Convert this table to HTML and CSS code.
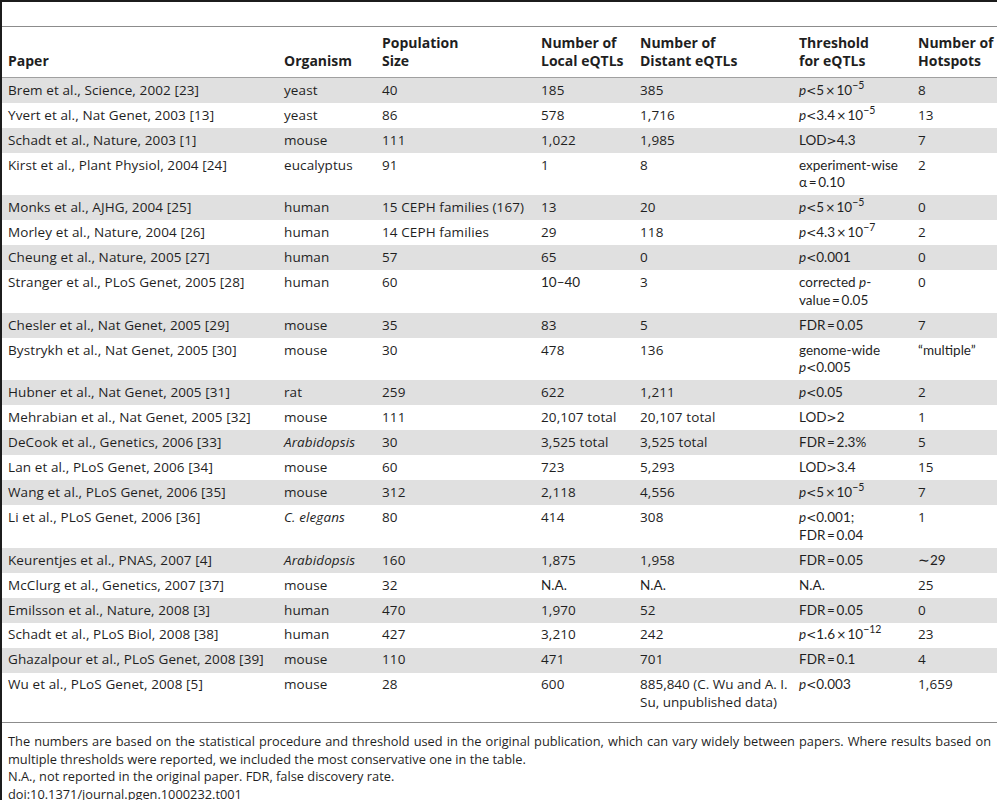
FILE: index.html
```html
<!DOCTYPE html>
<html lang="en">

<head>
    <meta charset="UTF-8" />
    <meta name="viewport" content="width=device-width, initial-scale=1.0" />
    <title>Table 1. eQTL studies</title>
    <link rel="stylesheet" href="styles.css">
</head>

<body>
    <div class="figure">
        <div class="caption"></div>
        <table class="data">
            <colgroup>
                <col class="c-paper">
                <col class="c-org">
                <col class="c-pop">
                <col class="c-local">
                <col class="c-distant">
                <col class="c-thresh">
                <col class="c-hot">
            </colgroup>
            <thead>
                <tr>
                    <th>Paper</th>
                    <th>Organism</th>
                    <th>Population<br>Size</th>
                    <th>Number of<br>Local eQTLs</th>
                    <th>Number of<br>Distant eQTLs</th>
                    <th>Threshold<br>for eQTLs</th>
                    <th>Number of<br>Hotspots</th>
                </tr>
            </thead>
            <tbody>
                <tr>
                    <td>Brem et al., Science, 2002 [23]</td>
                    <td>yeast</td>
                    <td>40</td>
                    <td>185</td>
                    <td>385</td>
                    <td class="m"><i>p</i><span class="op">&lt;</span>5<span class="op">&#8202;×&#8202;</span>10<sup>−5</sup></td>
                    <td>8</td>
                </tr>
                <tr>
                    <td>Yvert et al., Nat Genet, 2003 [13]</td>
                    <td>yeast</td>
                    <td>86</td>
                    <td>578</td>
                    <td>1,716</td>
                    <td class="m"><i>p</i><span class="op">&lt;</span>3.4<span class="op">&#8202;×&#8202;</span>10<sup>−5</sup></td>
                    <td>13</td>
                </tr>
                <tr>
                    <td>Schadt et al., Nature, 2003 [1]</td>
                    <td>mouse</td>
                    <td>111</td>
                    <td>1,022</td>
                    <td>1,985</td>
                    <td class="m">LOD<span class="op">&gt;</span>4.3</td>
                    <td>7</td>
                </tr>
                <tr>
                    <td>Kirst et al., Plant Physiol, 2004 [24]</td>
                    <td>eucalyptus</td>
                    <td>91</td>
                    <td>1</td>
                    <td>8</td>
                    <td class="m">experiment-wise<br>α&#8201;=&#8201;0.10</td>
                    <td>2</td>
                </tr>
                <tr>
                    <td>Monks et al., AJHG, 2004 [25]</td>
                    <td>human</td>
                    <td>15 CEPH families (167)</td>
                    <td>13</td>
                    <td>20</td>
                    <td class="m"><i>p</i><span class="op">&lt;</span>5<span class="op">&#8202;×&#8202;</span>10<sup>−5</sup></td>
                    <td>0</td>
                </tr>
                <tr>
                    <td>Morley et al., Nature, 2004 [26]</td>
                    <td>human</td>
                    <td>14 CEPH families</td>
                    <td>29</td>
                    <td>118</td>
                    <td class="m"><i>p</i><span class="op">&lt;</span>4.3<span class="op">&#8202;×&#8202;</span>10<sup>−7</sup></td>
                    <td>2</td>
                </tr>
                <tr>
                    <td>Cheung et al., Nature, 2005 [27]</td>
                    <td>human</td>
                    <td>57</td>
                    <td>65</td>
                    <td>0</td>
                    <td class="m"><i>p</i><span class="op">&lt;</span>0.001</td>
                    <td>0</td>
                </tr>
                <tr>
                    <td>Stranger et al., PLoS Genet, 2005 [28]</td>
                    <td>human</td>
                    <td>60</td>
                    <td class="m">10–40</td>
                    <td>3</td>
                    <td class="m">corrected <i>p</i>-<br>value&#8201;=&#8201;0.05</td>
                    <td>0</td>
                </tr>
                <tr>
                    <td>Chesler et al., Nat Genet, 2005 [29]</td>
                    <td>mouse</td>
                    <td>35</td>
                    <td>83</td>
                    <td>5</td>
                    <td class="m">FDR&#8201;=&#8201;0.05</td>
                    <td>7</td>
                </tr>
                <tr>
                    <td>Bystrykh et al., Nat Genet, 2005 [30]</td>
                    <td>mouse</td>
                    <td>30</td>
                    <td>478</td>
                    <td>136</td>
                    <td class="m">genome-wide<br><i>p</i><span class="op">&lt;</span>0.005</td>
                    <td class="m">“multiple”</td>
                </tr>
                <tr>
                    <td>Hubner et al., Nat Genet, 2005 [31]</td>
                    <td>rat</td>
                    <td>259</td>
                    <td>622</td>
                    <td>1,211</td>
                    <td class="m"><i>p</i><span class="op">&lt;</span>0.05</td>
                    <td>2</td>
                </tr>
                <tr>
                    <td>Mehrabian et al., Nat Genet, 2005 [32]</td>
                    <td>mouse</td>
                    <td>111</td>
                    <td>20,107 total</td>
                    <td>20,107 total</td>
                    <td class="m">LOD<span class="op">&gt;</span>2</td>
                    <td>1</td>
                </tr>
                <tr>
                    <td>DeCook et al., Genetics, 2006 [33]</td>
                    <td><i>Arabidopsis</i></td>
                    <td>30</td>
                    <td>3,525 total</td>
                    <td>3,525 total</td>
                    <td class="m">FDR&#8201;=&#8201;2.3%</td>
                    <td>5</td>
                </tr>
                <tr>
                    <td>Lan et al., PLoS Genet, 2006 [34]</td>
                    <td>mouse</td>
                    <td>60</td>
                    <td>723</td>
                    <td>5,293</td>
                    <td class="m">LOD<span class="op">&gt;</span>3.4</td>
                    <td>15</td>
                </tr>
                <tr>
                    <td>Wang et al., PLoS Genet, 2006 [35]</td>
                    <td>mouse</td>
                    <td>312</td>
                    <td>2,118</td>
                    <td>4,556</td>
                    <td class="m"><i>p</i><span class="op">&lt;</span>5<span class="op">&#8202;×&#8202;</span>10<sup>−5</sup></td>
                    <td>7</td>
                </tr>
                <tr>
                    <td>Li et al., PLoS Genet, 2006 [36]</td>
                    <td><i>C. elegans</i></td>
                    <td>80</td>
                    <td>414</td>
                    <td>308</td>
                    <td class="m"><i>p</i><span class="op">&lt;</span>0.001;<br>FDR&#8201;=&#8201;0.04</td>
                    <td>1</td>
                </tr>
                <tr>
                    <td>Keurentjes et al., PNAS, 2007 [4]</td>
                    <td><i>Arabidopsis</i></td>
                    <td>160</td>
                    <td>1,875</td>
                    <td>1,958</td>
                    <td class="m">FDR&#8201;=&#8201;0.05</td>
                    <td class="m">∼29</td>
                </tr>
                <tr>
                    <td>McClurg et al., Genetics, 2007 [37]</td>
                    <td>mouse</td>
                    <td>32</td>
                    <td class="m">N.A.</td>
                    <td class="m">N.A.</td>
                    <td class="m">N.A.</td>
                    <td>25</td>
                </tr>
                <tr>
                    <td>Emilsson et al., Nature, 2008 [3]</td>
                    <td>human</td>
                    <td>470</td>
                    <td>1,970</td>
                    <td>52</td>
                    <td class="m">FDR&#8201;=&#8201;0.05</td>
                    <td>0</td>
                </tr>
                <tr>
                    <td>Schadt et al., PLoS Biol, 2008 [38]</td>
                    <td>human</td>
                    <td>427</td>
                    <td>3,210</td>
                    <td>242</td>
                    <td class="m"><i>p</i><span class="op">&lt;</span>1.6<span class="op">&#8202;×&#8202;</span>10<sup>−12</sup></td>
                    <td>23</td>
                </tr>
                <tr>
                    <td>Ghazalpour et al., PLoS Genet, 2008 [39]</td>
                    <td>mouse</td>
                    <td>110</td>
                    <td>471</td>
                    <td>701</td>
                    <td class="m">FDR&#8201;=&#8201;0.1</td>
                    <td>4</td>
                </tr>
                <tr class="last">
                    <td>Wu et al., PLoS Genet, 2008 [5]</td>
                    <td>mouse</td>
                    <td>28</td>
                    <td>600</td>
                    <td class="nowrap">885,840 (C. Wu and A. I.<br>Su, unpublished data)</td>
                    <td class="m"><i>p</i><span class="op">&lt;</span>0.003</td>
                    <td>1,659</td>
                </tr>
            </tbody>
        </table>
        <div class="notes">
            <p class="just">The numbers are based on the statistical procedure and threshold used in the original publication, which can vary widely between papers. Where results based on multiple thresholds were reported, we included the most conservative one in the table.</p>
            <p>N.A., not reported in the original paper. FDR, false discovery rate.</p>
            <p>doi:10.1371/journal.pgen.1000232.t001</p>
        </div>
    </div>
</body>

</html>
```

FILE: styles.css
```css
* {
    box-sizing: border-box;
    margin: 0;
    padding: 0;
}

body {
    font-family: 'Open Sans', 'Noto Sans', sans-serif;
    font-size: 12.8px;
    line-height: 17.6px;
    color: #1f1f1f;
    background: #fff;
}

.figure {
    min-height: 100vh;
    border-top: 2px solid #1c1c1c;
    border-left: 2px solid #1c1c1c;
}

.caption {
    height: 24px;
}

.data {
    width: 100%;
    table-layout: fixed;
    border-collapse: collapse;
    border-top: 1px solid #8c8c8c;
    border-bottom: 1px solid #8c8c8c;
    font-size: 13.5px;
    letter-spacing: 0.1px;
}

.c-paper { width: 276px; }
.c-org { width: 98px; }
.c-pop { width: 159px; }
.c-local { width: 99px; }
.c-distant { width: 159px; }
.c-thresh { width: 119px; }
.c-hot { width: auto; }

.data th {
    text-align: left;
    vertical-align: bottom;
    white-space: nowrap;
    font-size: 14px;
    font-weight: 700;
    line-height: 18px;
    letter-spacing: 0;
    padding: 7px 6px 7px;
    border-bottom: 1px solid #a0a0a0;
}

.data td {
    vertical-align: top;
    padding: 3.7px 6px;
}

.data td.nowrap {
    white-space: nowrap;
    letter-spacing: 0;
}

.data tbody tr:nth-child(odd) {
    background: #e0e0e0;
}

.data tr.last td {
    padding-bottom: 10.7px;
}

/* math-ish cells set in the narrower face */
.data .m {
    font-family: 'Lato', 'Open Sans', sans-serif;
    letter-spacing: 0;
}

.data .op {
    font-family: 'DejaVu Sans', sans-serif;
    font-size: 12px;
    line-height: 0;
}

.data sup {
    font-size: 10.5px;
    line-height: 0;
    vertical-align: 6px;
}

.notes {
    padding: 10px 6px 0;
}

.notes .just {
    text-align: justify;
}
```
